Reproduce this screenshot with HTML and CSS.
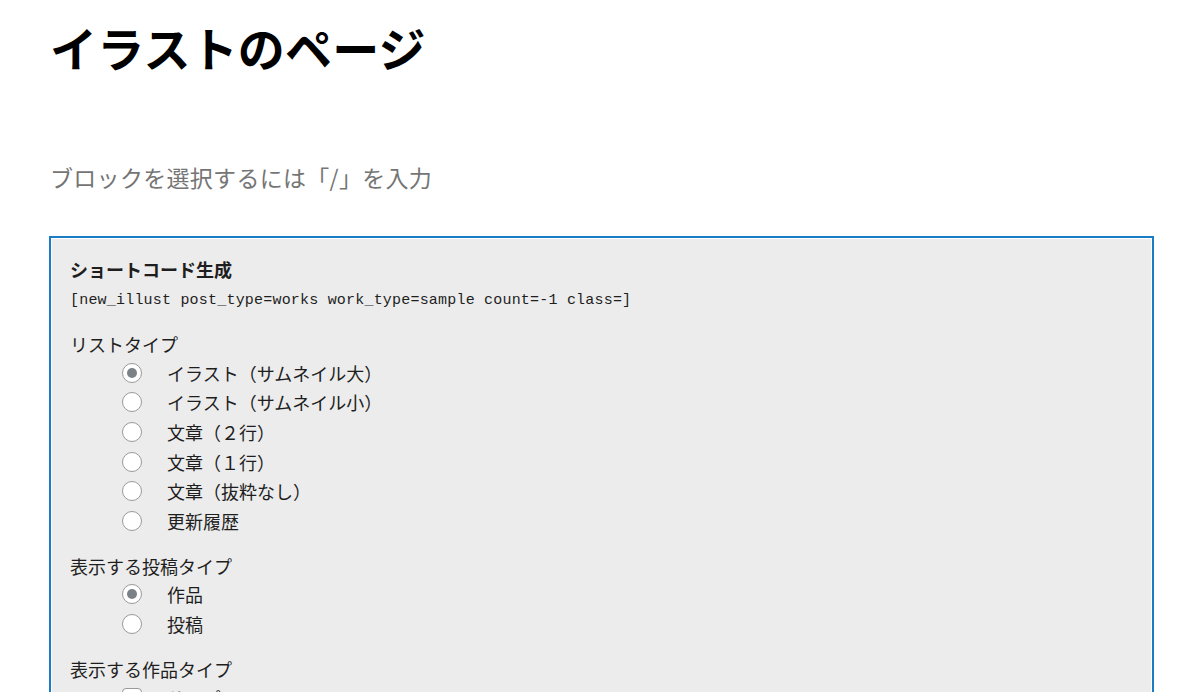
FILE: index.html
```html
<!doctype html>
<html lang="ja">
<head>
<meta charset="utf-8">
<title>イラストのページ</title>
<link rel="stylesheet" href="styles.css">
</head>
<body>
<div class="editor">
	<h1 class="page-title">イラストのページ</h1>
	<p class="placeholder">ブロックを選択するには「/」を入力</p>

	<div class="sc-box">
		<div class="sc-title">ショートコード生成</div>
		<div class="sc-code">[new_illust post_type=works work_type=sample count=-1 class=]</div>

		<div class="sc-group">
			<div class="sc-label">リストタイプ</div>
			<label class="opt"><input type="radio" name="list" checked><span>イラスト（サムネイル大）</span></label>
			<label class="opt"><input type="radio" name="list"><span>イラスト（サムネイル小）</span></label>
			<label class="opt"><input type="radio" name="list"><span>文章（２行）</span></label>
			<label class="opt"><input type="radio" name="list"><span>文章（１行）</span></label>
			<label class="opt"><input type="radio" name="list"><span>文章（抜粋なし）</span></label>
			<label class="opt"><input type="radio" name="list"><span>更新履歴</span></label>
		</div>

		<div class="sc-group">
			<div class="sc-label">表示する投稿タイプ</div>
			<label class="opt"><input type="radio" name="ptype" checked><span>作品</span></label>
			<label class="opt"><input type="radio" name="ptype"><span>投稿</span></label>
		</div>

		<div class="sc-group">
			<div class="sc-label">表示する作品タイプ</div>
			<label class="opt"><input type="checkbox" checked><span>サンプル</span></label>
			<label class="opt"><input type="checkbox"><span>その他</span></label>
		</div>
	</div>
</div>
</body>
</html>
```

FILE: styles.css
```css
*{ margin:0; padding:0; box-sizing:border-box;}
body{ background:#fff; color:#1e1e1e; font-family:"Noto Sans CJK JP", "Noto Sans", sans-serif;}

.editor{ padding:14px 46px 0 49px;}
.page-title{ font-size:47px; line-height:66px; font-weight:700; color:#000; padding-left:1px; letter-spacing:0.2px;}
.placeholder{ margin-top:80px; font-size:23px; line-height:34px; color:#757575; padding-left:1px; letter-spacing:0.3px;}

.sc-box{ margin-top:42px; background:#ececec; border:2px solid #1a7cc4; box-shadow:inset 0 0 0 1px #fff; padding:18px 19px 24px 19px; font-size:18px;}
.sc-title{ font-weight:700; line-height:26px;}
.sc-code{ font-family:"Liberation Mono", "DejaVu Sans Mono", monospace; font-size:15px; letter-spacing:0.2px; line-height:26px; margin-top:6px; color:#1e1e1e;}

.sc-group{ margin-top:16px;}
.sc-label{ line-height:28px;}
.opt{ display:flex; align-items:center; gap:25px; padding-left:52px; height:29.6px; line-height:24px;}

.opt input{ -webkit-appearance:none; appearance:none; width:20px; height:20px; border:1px solid #9a9a9a; border-radius:50%; background:#fff; display:grid; place-items:center; flex:none;}
.opt input:checked::before{ content:""; width:10px; height:10px; border-radius:50%; background:#7a8288;}
.opt input[type=checkbox]{ border-radius:4px;}
.opt input[type=checkbox]:checked::before{ border-radius:2px;}
```
